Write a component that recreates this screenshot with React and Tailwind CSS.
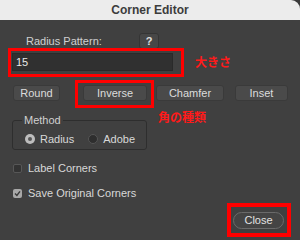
import React from 'react';

const Btn = ({ label, className = '' }) => (
  <div
    className={`h-[16px] flex items-center justify-center rounded-[3px] bg-[#4a4a4a] border border-[#3a3a3a] text-[11px] text-[#dcdcdc] ${className}`}
  >
    {label}
  </div>
);

const RedBox = ({ className = '' }) => (
  <div className={`absolute border-[3px] border-[#ff0000] pointer-events-none ${className}`} />
);

const App = () => {
  return (
    <div
      className="w-[300px] h-[240px] overflow-hidden bg-[#404040] flex flex-col"
      style={{ fontFamily: '"Liberation Sans", "Noto Sans CJK JP", sans-serif' }}
    >
      <div className="bg-[#3a3a3a]">
        <div className="h-[20px] bg-[#ececec] rounded-tr-[9px] flex items-center justify-center text-[12px] font-bold text-[#3c3c3c]">
          Corner Editor
        </div>
      </div>

      <div className="flex-1 px-[12px] flex flex-col">
        {/* radius pattern */}
        <div className="mt-[13px] h-[16px] flex items-center">
          <span className="ml-[14px] w-[113px] text-[11px] text-[#d0d0d0]">Radius Pattern:</span>
          <div className="w-[20px] h-[16px] flex items-center justify-center rounded-[3px] bg-[#474747] border border-[#353535] text-[11px] font-bold text-[#e0e0e0]">
            ?
          </div>
        </div>

        <div className="mt-[3px] flex items-center">
          <div className="relative">
            <div className="w-[161px] h-[18px] bg-[#303030] border border-[#2a2a2a] flex items-center pl-[3px] text-[11px] text-[#e8e8e8]">
              15
            </div>
            <RedBox className="-left-[4px] -top-[5px] w-[176px] h-[29px]" />
          </div>
          <span className="ml-[22px] text-[12px] font-bold text-[#ff1a1a] mt-[2px]">大きさ</span>
        </div>

        {/* corner types */}
        <div className="mt-[13px] flex items-center">
          <Btn label="Round" className="ml-[1px] w-[47px]" />
          <div className="relative ml-[23px]">
            <Btn label="Inverse" className="w-[64px] border-[#2f5aa8]" />
            <RedBox className="-left-[8px] -top-[5px] w-[79px] h-[28px]" />
          </div>
          <Btn label="Chamfer" className="ml-[9px] w-[68px]" />
          <Btn label="Inset" className="ml-[11px] w-[53px]" />
        </div>

        <div className="mt-[11px] flex items-start">
          <div className="relative w-[135px] h-[38px]">
            <div className="absolute left-0 top-[8px] w-[135px] h-[30px] border border-[#2e2e2e] rounded-[3px] pt-[12px] pl-[12px]">
              <div className="h-[12px] flex items-center text-[11px] text-[#d8d8d8]">
                <div className="w-[10px] h-[10px] rounded-full bg-[#bdbdbd] flex items-center justify-center">
                  <div className="w-[4px] h-[4px] rounded-full bg-[#555]" />
                </div>
                <span className="ml-[5px]">Radius</span>
                <div className="ml-[14px] w-[10px] h-[10px] rounded-full bg-[#2e2e2e] border border-[#555]" />
                <span className="ml-[5px]">Adobe</span>
              </div>
            </div>
            <span className="absolute left-[10px] top-[2px] px-[2px] bg-[#404040] text-[11px] leading-[12px] text-[#d0d0d0]">
              Method
            </span>
          </div>
          <span className="ml-[11px] text-[12px] leading-[12px] font-bold text-[#ff1a1a]">角の種類</span>
        </div>

        {/* checkboxes */}
        <div className="mt-[12px] h-[12px] flex items-center">
          <div className="ml-[1px] w-[9px] h-[9px] rounded-[2px] bg-[#333] border border-[#575757]" />
          <span className="ml-[6px] text-[11px] text-[#d8d8d8]">Label Corners</span>
        </div>
        <div className="mt-[13px] h-[12px] flex items-center">
          <div className="ml-[1px] w-[9px] h-[9px] rounded-[2px] bg-[#a8a8a8] flex items-center justify-center">
            <svg width="7" height="7" viewBox="0 0 7 7">
              <path d="M1 3.6 L2.9 5.4 L6 1.4" fill="none" stroke="#383838" strokeWidth="1.4" />
            </svg>
          </div>
          <span className="ml-[6px] text-[11px] text-[#d8d8d8]">Save Original Corners</span>
        </div>

        <div className="mt-[13px] flex justify-end pr-[4px]">
          <div className="relative">
            <div className="w-[51px] h-[17px] rounded-full border border-[#6a6a6a] bg-[#444] flex items-center justify-center text-[11px] text-[#e2e2e2]">
              Close
            </div>
            <RedBox className="-left-[6px] -top-[9px] w-[64px] h-[34px] border-[4px]" />
          </div>
        </div>
      </div>
    </div>
  );
};

export default App;
